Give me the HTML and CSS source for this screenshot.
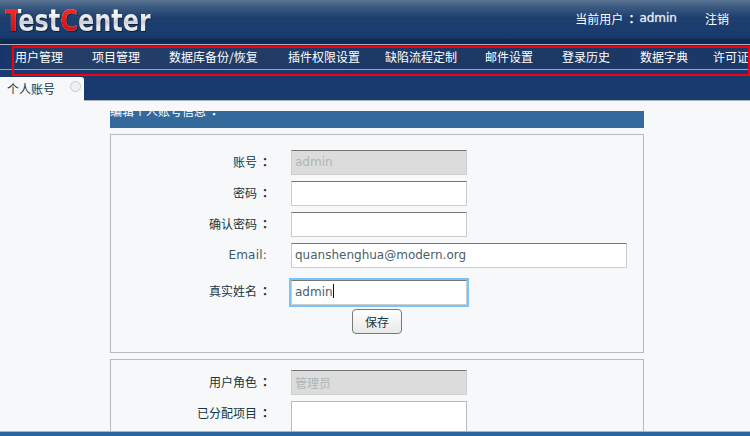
FILE: index.html
```html
<!DOCTYPE html>
<html lang="zh">
<head>
<meta charset="utf-8">
<title>TestCenter</title>
<link rel="stylesheet" href="styles.css">
</head>
<body>
<div class="page">
  <header class="top">
    <div class="logo"><span class="red">T</span>est<span class="red">C</span>enter</div>
    <div class="user">
      <span>当前用户<span class="colon">：</span></span><span class="name">admin</span><a class="logout">注销</a>
    </div>
  </header>
  <div class="navwrap">
    <nav class="nav">
      <a>用户管理</a><a>项目管理</a><a>数据库备份/恢复</a><a>插件权限设置</a><a>缺陷流程定制</a><a>邮件设置</a><a>登录历史</a><a>数据字典</a><a>许可证</a>
    </nav>
    <div class="redbox"></div>
  </div>
  <div class="tabs">
    <div class="tab">个人账号<span class="close"></span></div>
  </div>
  <main class="main">
    <div class="column">
      <div class="title"><span class="title-text">编辑个人账号信息<span class="colon">：</span></span></div>
      <section class="panel first">
        <div class="row"><label>账号<span class="colon">：</span></label><div class="field disabled">admin</div></div>
        <div class="row"><label>密码<span class="colon">：</span></label><div class="field"></div></div>
        <div class="row"><label>确认密码<span class="colon">：</span></label><div class="field"></div></div>
        <div class="row"><label class="latin">Email:</label><div class="field wide">quanshenghua@modern.org</div></div>
        <div class="row focus-row"><label>真实姓名<span class="colon">：</span></label><div class="field focused">admin<i class="caret"></i></div></div>
        <div class="actions"><button class="save" type="button">保存</button></div>
      </section>
      <section class="panel second">
        <div class="row"><label>用户角色<span class="colon">：</span></label><div class="field disabled cjk">管理员</div></div>
        <div class="row area-row"><label>已分配项目<span class="colon">：</span></label><div class="field area"></div></div>
      </section>
    </div>
  </main>
  <footer class="foot"></footer>
</div>
</body>
</html>
```
FILE: styles.css
```css
* { box-sizing: border-box; }
html, body { margin: 0; padding: 0; }
body { font-family: "DejaVu Sans", "Noto Sans CJK SC", sans-serif; font-size: 12px; color: #17363f; }
.page { width: 750px; height: 436px; display: flex; flex-direction: column; overflow: hidden; background: #f6f8fa; }
.colon { display: inline-block; width: 14px; padding-left: 2px; text-align: left; white-space: nowrap; font-family: "Noto Sans CJK TC", sans-serif; font-weight: 700; }

.top {
  height: 44px; flex: none; display: flex; justify-content: space-between; align-items: flex-start;
  background: linear-gradient(#5a7492 0, #3b5a80 7px, #1e3f6e 18px, #173a6e 38px, #0f2a52 39px, #0f2a52 44px);
}
.logo {
  margin: 2px 0 0 5px; font-family: "DejaVu Sans", sans-serif; font-weight: 700; font-size: 31px; line-height: 36px;
  transform: scaleX(.775); transform-origin: 0 0; white-space: nowrap; letter-spacing: 0;
  color: transparent; background: linear-gradient(#fff 8px, #e8e8e8 16px, #cfcfcf 20px, #eee 26px, #c9c9c9 32px);
  -webkit-background-clip: text; background-clip: text;
  filter: drop-shadow(1px 1px 0 #0c2140);
}
.red { background: linear-gradient(#f02a25 8px, #e3191c 20px, #c81216 32px); -webkit-background-clip: text; background-clip: text; color: transparent; }
.user { display: flex; align-items: center; color: #fff; font-family: "Noto Sans CJK SC", sans-serif; height: 36px; padding-right: 21px; }
.name { margin-left: 2px; font-family: "DejaVu Sans", sans-serif; color: #e4eaf2; text-shadow: 0 0 1px #c4d0e0; }
.logout { margin-left: 28px; }

.navwrap { position: relative; flex: none; height: 26px; border-top: 1px solid #aab4c0; border-bottom: 1px solid #9aa5b3;
  background: linear-gradient(90deg, #17356a, #253f68 6%, #1d3a66 50%, #1b3866); }
.nav { display: grid; grid-template-columns: 77px 77px 119px 97px 100px 77px 78px 73px 40px; height: 23px; padding-left: 15px;
  align-items: center; color: #fff; font-family: "Noto Sans CJK SC", sans-serif; font-size: 12px; white-space: nowrap; }
.redbox { position: absolute; left: 12px; right: 0; top: 1px; height: 30px; border: 2px solid #f5000f; }

.tabs { flex: none; height: 31px; padding-top: 7px; background: #193a6f; border-bottom: 1px solid #a9b3b8; }
.tab { position: relative; width: 84px; height: 24px; padding: 2px 0 0 7px; background: #f6f8fa; border-top-right-radius: 3px;
  font-family: "Noto Sans CJK SC", sans-serif; font-size: 12px; line-height: 20px; color: #17363f; }
.close { position: absolute; left: 70px; top: 4px; width: 11px; height: 11px; border-radius: 50%; background: #f0f0f0; border: 1.5px solid #c8ccce; }

.main { flex: 1; min-height: 0; overflow: hidden; }
.column { width: 534px; margin: 10px 0 0 110px; }
.title { height: 17px; overflow: hidden; background: #34699c; color: #fff; font-family: "Noto Sans CJK SC", sans-serif; line-height: 12px; }
.title-text { display: block; margin-top: -6px; }
.panel { border: 1px solid #b9b9b9; padding-top: 15px; }
.first { height: 219px; margin-top: 6px; }
.second { margin-top: 6px; padding-top: 10px; height: 100px; }

.row { display: flex; align-items: center; margin-bottom: 5.5px; height: 25.5px; }
.row label { width: 160px; margin-right: 20px; padding-bottom: 3px; text-align: right; font-family: "Noto Sans CJK SC", sans-serif; font-size: 12px; white-space: nowrap; }
.row label.latin { font-family: "DejaVu Sans", sans-serif; color: #3e5a66; padding-right: 4px; padding-bottom: 1px; letter-spacing: .2px; }
.field { width: 176px; height: 25px; flex: none; padding: 0 3px; background: #fff; line-height: 23px;
  border: 1px solid #cdcdcd; border-top-color: #767676; color: #496168; }
.disabled { background: #dcdcdc; color: #acb6b6; border-color: #cfcfcf; border-top-color: #767676; }
.cjk { font-family: "Noto Sans CJK SC", sans-serif; }
.wide { width: 336px; }
.focus-row { margin-top: 11px; margin-bottom: 4px; }
.focused { box-shadow: 0 0 0 2px #7cc4f5; }
.caret { display: inline-block; width: 1px; height: 14px; background: #111; vertical-align: -2px; }
.actions { padding-left: 241px; }
.save { width: 50px; height: 25px; padding: 0; border: 1px solid #7a7a7a; border-radius: 4px; background: linear-gradient(#fff, #e8e8e8);
  color: #17363f; font-family: "Noto Sans CJK SC", sans-serif; font-size: 12px; }
.area-row { align-items: flex-start; height: auto; }
.area-row label { padding-top: 3px; }
.area { height: 60px; border-color: #bbb; }

.foot { flex: none; height: 5px; background: #2a649f; border-top: 1px solid #a9b3b8; }
```
